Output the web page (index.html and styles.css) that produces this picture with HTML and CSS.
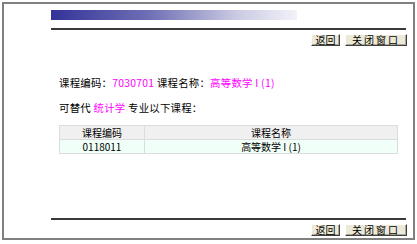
FILE: index.html
```html
<!DOCTYPE html>
<html lang="zh-CN">
<head>
    <meta charset="UTF-8">
    <title>可替代课程</title>
    <link rel="stylesheet" href="styles.css">
</head>
<body>
    <div class="frame">
        <div class="title-bar"></div>
        <div class="rule"></div>
        <div class="btn-row">
            <button class="btn btn-back">返回</button>
            <button class="btn btn-close">关闭窗口</button>
        </div>

        <p class="info first">课程编码：<span class="hl">7030701</span> 课程名称：<span class="hl">高等数学 I (1)</span></p>
        <p class="info">可替代 <span class="hl">统计学</span> 专业以下课程：</p>

        <table class="course-table">
            <tr>
                <th class="col-code">课程编码</th>
                <th>课程名称</th>
            </tr>
            <tr>
                <td>0118011</td>
                <td>高等数学 I (1)</td>
            </tr>
        </table>

        <div class="rule bottom"></div>
        <div class="btn-row">
            <button class="btn btn-back">返回</button>
            <button class="btn btn-close">关闭窗口</button>
        </div>
    </div>
</body>
</html>
```

FILE: styles.css
```css
body, html {
    margin: 0;
    padding: 0;
    background: #fff;
    font-family: "Noto Sans CJK SC", "DejaVu Sans", sans-serif;
    color: #000;
}
.frame {
    box-sizing: border-box;
    margin: 2px;
    width: 413px;
    height: 238px;
    border: 2px solid #808080;
    padding: 6px 7px 2px 47px;
    display: flex;
    flex-direction: column;
}
.title-bar {
    width: 246px;
    height: 10px;
    background: linear-gradient(to right, #333399, #6f6fb5 40%, #c9c9e3 75%, #f2f2f9);
}
.rule {
    margin-top: 8px;
    height: 2px;
    background: #3a3a3a;
}
.rule.bottom {
    margin-top: auto;
}
.btn-row {
    margin-top: 4px;
    display: flex;
    justify-content: flex-end;
    gap: 5px;
    margin-right: -1px;
}
.btn {
    box-sizing: border-box;
    height: 12px;
    padding: 0;
    font-family: inherit;
    font-size: 10px;
    line-height: 10px;
    background: #ece9d8;
    border: 1px solid;
    border-color: #fff #404040 #404040 #fff;
    box-shadow: inset -1px -1px 0 #aca899;
    color: #000;
}
.btn-back {
    width: 29px;
}
.btn-close {
    width: 62px;
    letter-spacing: 2px;
}
.info {
    margin: 11px 0 0 8px;
    font-size: 10.4px;
    line-height: 14px;
    letter-spacing: 0.25px;
    white-space: nowrap;
}
.info.first {
    margin-top: 30px;
}
.hl {
    color: #ff00ff;
}
.course-table {
    margin: 10px 0 0 8px;
    width: 339px;
    border-collapse: collapse;
    border: 1px solid #d9d9d9;
    font-size: 10px;
}
.course-table th,
.course-table td {
    height: 13px;
    padding: 0;
    line-height: 13px;
    text-align: center;
    font-weight: normal;
    border: 1px solid #dcdcdc;
}
.course-table th {
    background: #f0f0f0;
}
.course-table td {
    background: #f0fff8;
}
.col-code {
    width: 84px;
}
```
